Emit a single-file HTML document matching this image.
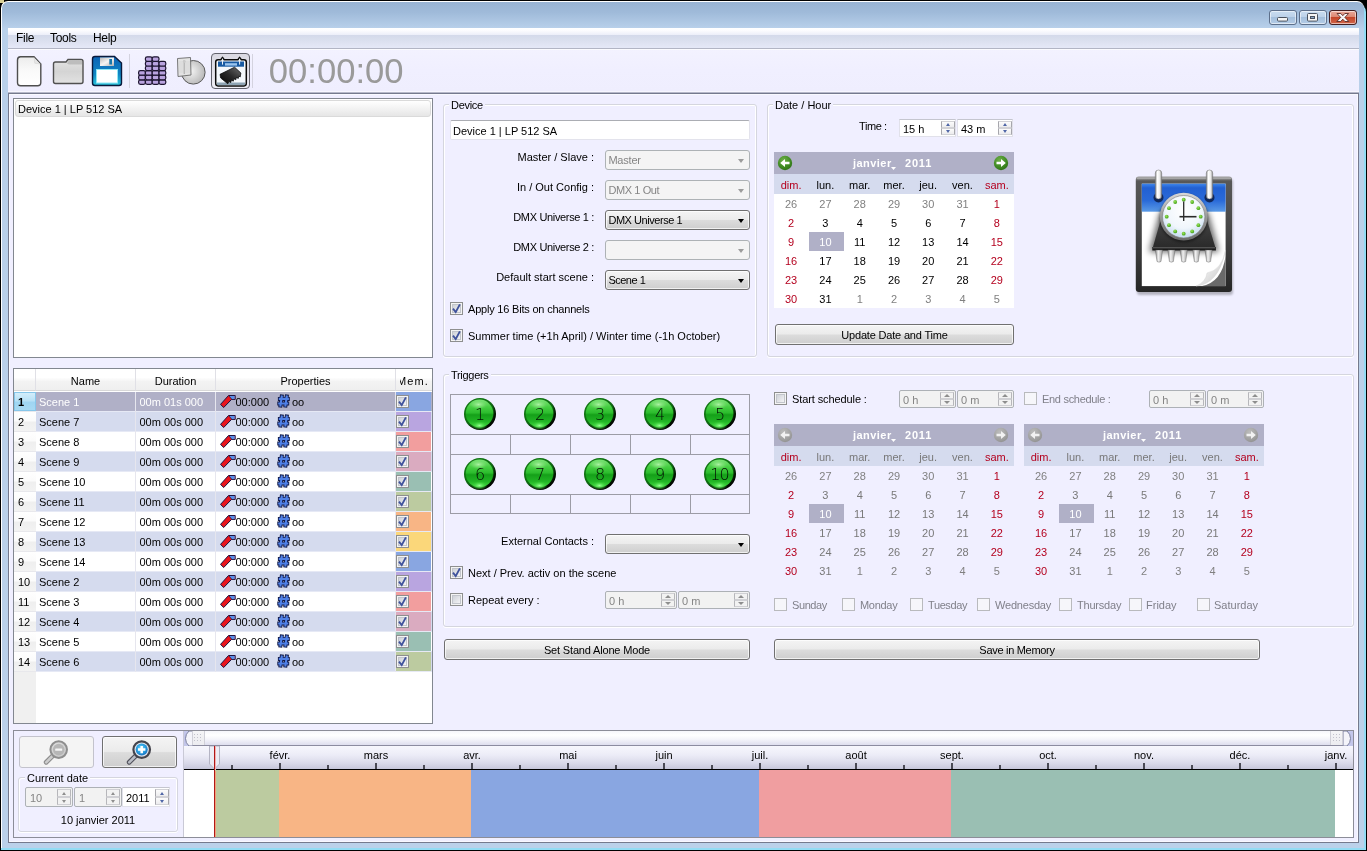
<!DOCTYPE html>
<html>
<head>
<meta charset="utf-8">
<title>Stand Alone</title>
<style>
*{box-sizing:border-box;margin:0;padding:0}
html,body{width:1367px;height:851px;overflow:hidden;background:#000}
body{font-family:"Liberation Sans","DejaVu Sans",sans-serif;font-size:11px;color:#000;position:relative}
.abs,.abs-all *{position:absolute}
#win{position:absolute;left:0;top:0;width:1367px;height:851px;overflow:hidden;will-change:transform}
#frame{position:absolute;left:1px;top:1px;width:1363px;height:847px;border-radius:7px 7px 0 0;
 background:linear-gradient(to bottom,#98b3d3 0px,#9fbad9 10px,#b9d1eb 27px,#b9d0ea 60px,#bbd1ea 100%);
 border-left:1px solid #fff;border-top:1px solid #fff}
#cyan{position:absolute;left:1px;top:4px;width:1365px;height:846px;background:#93dcf4;border-radius:8px 8px 0 0}
#client{position:absolute;left:8px;top:28px;width:1351px;height:815px;background:#f0efff}
/* caption buttons */
.cap{position:absolute;top:10px;height:15px;border:1px solid #5d6f8a;border-radius:3px;
 background:linear-gradient(to bottom,#c9dcf0 0,#bdd2e9 45%,#a4bfdc 50%,#b5cde7 100%);box-shadow:inset 0 0 0 1px rgba(255,255,255,.55)}
.cap.close{background:linear-gradient(to bottom,#e9a99b 0,#dc8873 45%,#c4462a 50%,#d0664a 100%);border-color:#431e20}
/* menu */
#menubar{position:absolute;left:8px;top:28px;width:1351px;height:20px;
 background:linear-gradient(to bottom,#ffffff 0,#fdfdff 2px,#eceef9 7px,#d3d9ea 7px,#dadfee 12px,#e5e8f7 20px)}
#menubar span{position:absolute;top:3px;font-size:12px;font-family:"Liberation Sans",sans-serif;letter-spacing:-.3px}
.hline{position:absolute;height:1px}
.tb{font-family:"Liberation Sans",sans-serif;font-size:12px}
.gb{position:absolute;border:1px solid #d5d6de;border-radius:3px;box-shadow:inset 1px 1px 0 #fff, inset -1px 0 0 #fff, 0 1px 0 #fff}
.gbl{position:absolute;background:#f0efff;padding:0 2px;line-height:13px;height:13px;white-space:nowrap}
.lbl{position:absolute;white-space:nowrap;line-height:13px;height:13px}
.r{text-align:right}
.dis{color:#80808a}

#cframe{position:absolute;left:8px;top:93px;width:1351px;height:750px;border:1px solid #757a8e;box-shadow:inset 0 0 0 1px #f9f9ff;background:#f0efff}
#devlist{position:absolute;left:13px;top:98px;width:420px;height:260px;border:1px solid #828790;background:#fff}
#devitem{position:absolute;left:15px;top:100px;width:416px;height:17px;border:1px solid #dadada;border-radius:3px;background:linear-gradient(to bottom,#ffffff 0,#f4f4f4 45%,#e6e6e6 100%)}
#sctab{position:absolute;left:13px;top:368px;width:420px;height:356px;border:1px solid #828790;background:#fff;overflow:hidden}
#sctab .hd{position:absolute;top:0;height:22px;background:linear-gradient(to bottom,#ffffff 0,#ffffff 40%,#f3f3f3 60%,#efefef 100%);border-right:1px solid #e0e0e6;border-bottom:1px solid #d8d8d8;text-align:center;line-height:24px}
#sctab .rh{position:absolute;left:0;width:22px;height:20px;background:linear-gradient(to bottom,#ffffff 0,#fbfbfb 45%,#efefef 55%,#f3f3f3 100%);border-bottom:1px solid #e8e8ec;padding-left:4px;line-height:20px}
#sctab .rh.sel{background:linear-gradient(to bottom,#d6effb 0,#b8e1f6 45%,#9fd5f2 55%,#a9daf3 100%);font-weight:bold;box-shadow:inset 0 0 0 1px #86c6ea}
#sctab .row{position:absolute;left:22px;width:396px;height:20px;line-height:19px;border-bottom:1px solid #e6e9f5}
#sctab .row.alt{background:#d5dbee}
#sctab .row.sel{background:#b0b0c7;color:#fff}
#sctab .row span{position:absolute;top:0;line-height:20px;white-space:nowrap}
#sctab .row .vl{position:absolute;top:0;width:1px;height:20px;background:#e6e6ee}
#sctab .mem{position:absolute;left:382px;top:0;width:35px;height:19px}
.cb{position:absolute;width:13px;height:13px;border:1px solid #8e8f8f;background:#f4f4f4;box-shadow:inset 0 0 0 1px #f4f4f4, inset 0 0 0 2px #c2c5cb;}
.cb i{position:absolute;left:2px;top:2px;width:7px;height:7px;background:linear-gradient(135deg,#cfd2d8 0,#f3f3f5 100%)}
.cb svg{position:absolute;left:1px;top:1px}
.cb.d{border-color:#b9babd;box-shadow:none;background:#f6f6fa}

.combo{position:absolute;width:145px;height:20px;border:1px solid #707070;border-radius:3px;background:linear-gradient(to bottom,#f4f4f4 0,#ebebeb 48%,#dcdcdc 52%,#cecece 100%);box-shadow:inset 0 0 0 1px rgba(255,255,255,.7);padding:3px 0 0 2.400px;line-height:13px;white-space:nowrap}
.combo:after{content:"";position:absolute;right:5px;top:8px;border:4px solid transparent;border-top:4px solid #000;border-bottom:none;border-left-width:3.700px;border-right-width:3.700px}
.combo.d{border-color:#adb2b5;background:#f4f4f4;color:#858585;box-shadow:none}
.combo.d:after{border-top-color:#9c9c9c}
.edit{position:absolute;background:#fff;border:1px solid #e3e3ec;border-top-color:#abadb3;border-radius:2px}
.spin{position:absolute;height:18px;background:#fff;border:1px solid #e1e1ea;border-top-color:#c5c6cf;padding:3px 0 0 3px;line-height:13px;white-space:nowrap}
.spin b{position:absolute;right:0;width:14px;height:7px;border:1px solid #d2d2d6;border-left-color:#a6a6ac;border-right-color:#a6a6ac;background:linear-gradient(to bottom,#fcfcfc,#ececee)}
.spin b.u{top:1px}.spin b.dn{bottom:1px}
.spin b:after{content:"";position:absolute;left:3.500px;top:1px;border:2.500px solid transparent}
.spin b.u:after{border-bottom:3px solid #4f66a6;border-top:none}
.spin b.dn:after{border-top:3px solid #4f66a6;border-bottom:none}
.spin.d{background:#f2f2f2;border-color:#adb1b6;color:#858585;border-radius:2px}
.spin.d b{right:1px;border-color:#d0d0d4;border-left-color:#b6b6ba;border-right-color:#b6b6ba;background:#f2f2f2}
.spin.d b:after{left:3px;border-width:3px}
.spin.d b.u:after{border-bottom-color:#8e8e8e}
.spin.d b.dn:after{border-top-color:#8e8e8e}
.btn{position:absolute;border:1px solid #707070;border-radius:3px;background:linear-gradient(to bottom,#f4f4f4 0,#ebebeb 48%,#dcdcdc 52%,#cecece 100%);box-shadow:inset 0 0 0 1px rgba(255,255,255,.7);text-align:center;line-height:20px;white-space:nowrap}
.cal{position:absolute;width:240px;height:156px;background:#fff}
.cal .nav{position:absolute;left:0;top:0;width:240px;height:22px;background:#b0b0c7;color:#fff;font-weight:bold}
.cal .nav span{position:absolute;top:5px;line-height:13px;letter-spacing:.45px}
.cal .dn{position:absolute;left:0;top:22px;width:240px;height:20px;background:#d5dbee}
.cal span.c{position:absolute;width:34px;text-align:center;line-height:13px;height:13px}
.cal .red{color:#b4001e}
.cal .gr{color:#808080}
.cal .selc{position:absolute;background:#b0b0c7}
.cal.d{background:transparent;color:#787878}
.cal.d .red{color:#b4001e}

.tg{position:absolute;background:#9c9ca6}
.tbn{position:absolute;width:32px;height:32px;text-align:center;font-family:"DejaVu Sans","Liberation Sans",sans-serif;font-weight:200;font-size:16px;line-height:34px;color:#041004}
.tbn svg{position:absolute;left:0;top:0}
.tbn span{position:relative}

#bpanel{position:absolute;left:13px;top:730px;width:1341px;height:108px;border:1px solid #8c8d98}
#tl{position:absolute;left:184px;top:731px;width:1169px;height:106px;background:#fff;overflow:hidden}
#tl .sb{position:absolute;left:0;top:0;width:1169px;height:15px;background:linear-gradient(to bottom,#f6f6fb 0,#ffffff 30%,#f4f4fa 60%,#dedeee 100%);border-bottom:1px solid #8c8ca0}
#tl .ruler{position:absolute;left:0;top:15px;width:1169px;height:24px;background:linear-gradient(to bottom,#f7f7fd 0,#ececf7 40%,#d9d9e9 75%,#c6c6da 100%);border-bottom:1px solid #000}
#tl .mk{position:absolute;top:32px;width:2px;height:6px;background:#4a4a55}
#tl .mn{position:absolute;top:34px;width:2px;height:4px;background:#4a4a55}
#tl .ml{position:absolute;top:18px;width:60px;margin-left:-29px;text-align:center;line-height:13px;height:13px}
#tl .seg{position:absolute;top:39px;height:67px}
.grip{position:absolute;top:0;width:13px;height:14px;border-left:1px solid #d0d0d8;border-right:1px solid #d0d0d8;background:linear-gradient(to bottom,#f4f4f6,#ececf0)}

.spin.s20{height:20px;padding-top:4px}
.spin.s20 b{height:8px;top:1px}
.spin.s20 b.dn{top:9px;bottom:auto}
.spin.s20 b:after{left:3.500px;top:2px;border-width:2.800px;border-top-width:0;border-bottom-width:3px}
.spin.s20 b.dn:after{border-top-width:3px;border-bottom-width:0;top:2px}
</style>
</head>
<body>
<div id="win">
<div style="position:absolute;left:0;top:0;width:4px;height:3px;background:#d8cf96"></div>
<div id="cyan"></div>
<div id="frame"></div>
<div class="cap" style="left:1269px;width:28px"></div>
<div class="cap" style="left:1299px;width:28px"></div>
<div class="cap close" style="left:1329px;width:28px"></div>
<svg style="position:absolute;left:1269px;top:10px" width="90" height="15" viewBox="1269 10 90 15">
<rect x="1277.500" y="17.500" width="10" height="3.600" rx="1" fill="#f4f4f4" stroke="#4a525e" stroke-width="1"/>
<rect x="1307.500" y="13.500" width="10" height="7.600" rx="1" fill="#f4f4f4" stroke="#4a525e" stroke-width="1"/>
<rect x="1310.500" y="16.500" width="4" height="2" fill="#8aa6c6" stroke="#4a525e" stroke-width="1"/>
<path d="M1337 13.500 L1340.800 13.500 L1342.800 15.700 L1344.800 13.500 L1348.600 13.500 L1344.900 17.400 L1348.800 21.500 L1344.900 21.500 L1342.800 19.200 L1340.700 21.500 L1336.800 21.500 L1340.700 17.400 Z" fill="#f6f6f6" stroke="#5a2a26" stroke-width=".9" stroke-linejoin="round"/>
</svg>
<div id="client"></div>
<div id="menubar"><span style="left:8px">File</span><span style="left:42px">Tools</span><span style="left:85px">Help</span></div>
<div class="hline" style="left:8px;top:48px;width:1351px;background:#b2b5c4"></div>

<div id="toolbar" style="position:absolute;left:8px;top:49px;width:1351px;height:43px;background:linear-gradient(to bottom,#f3f2ff 0,#f0efff 50%,#efeefe 100%)"></div>
<div class="hline" style="left:8px;top:49px;width:1351px;background:#fbfbff"></div>
<svg style="position:absolute;left:8px;top:49px" width="420" height="43" viewBox="8 49 420 43">
<defs>
<linearGradient id="gDoc" x1="0" y1="0" x2="0" y2="1"><stop offset="0" stop-color="#ececec"/><stop offset=".5" stop-color="#fafafa"/><stop offset="1" stop-color="#ffffff"/></linearGradient>
<linearGradient id="gFold" x1="0" y1="0" x2="0" y2="1"><stop offset="0" stop-color="#e4e4e4"/><stop offset=".5" stop-color="#d4d4d4"/><stop offset="1" stop-color="#e2e2e2"/></linearGradient>
<linearGradient id="gSave" x1="0" y1="0" x2="0" y2="1"><stop offset="0" stop-color="#0c63b4"/><stop offset=".6" stop-color="#0f84c4"/><stop offset="1" stop-color="#2bc6dc"/></linearGradient>
<linearGradient id="gShut" x1="0" y1="0" x2="1" y2="1"><stop offset="0" stop-color="#b9b9b9"/><stop offset=".5" stop-color="#f4f4f4"/><stop offset="1" stop-color="#b0b0b0"/></linearGradient>
<radialGradient id="gPie" cx=".4" cy=".45" r=".65"><stop offset="0" stop-color="#f4f4f4"/><stop offset="1" stop-color="#b4b4b4"/></radialGradient>
<linearGradient id="gBtn" x1="0" y1="0" x2="0" y2="1"><stop offset="0" stop-color="#d9d8e2"/><stop offset=".5" stop-color="#e3e2ea"/><stop offset="1" stop-color="#efeef6"/></linearGradient>
<linearGradient id="gChip" x1="0" y1="1" x2="1" y2="0"><stop offset="0" stop-color="#050505"/><stop offset=".5" stop-color="#2a2a2a"/><stop offset="1" stop-color="#6e6e6e"/></linearGradient>
</defs>
<!-- new -->
<path d="M20.500 56.800 H34 L40.800 64 V82.500 Q40.800 85.700 37.600 85.700 H20.700 Q17.500 85.700 17.500 82.500 V60 Q17.500 56.800 20.500 56.800 Z" fill="url(#gDoc)" stroke="#4e4e4e" stroke-width="1.400"/>
<path d="M34 57.500 L34.800 63.200 L40.300 64" fill="#e6e6e6" stroke="#d2d2d2" stroke-width=".6"/>
<!-- open -->
<path d="M55.5 62 H66 L68 59.5 H81 Q83 59.5 83 61.5 V81.5 Q83 83.5 81 83.5 H55.5 Q53.5 83.5 53.5 81.5 V64 Q53.5 62 55.5 62 Z" fill="url(#gFold)" stroke="#505050" stroke-width="1.400"/>
<path d="M67 63.5 Q68 60.5 70 60.5 H82 V64.5 H70 Q68 64.5 67 63.5Z" fill="#bdbdbd"/>
<!-- save -->
<path d="M95 56.5 H114.5 L121.5 63 V83 Q121.500 85.500 119 85.500 H95 Q92.500 85.500 92.500 83 V59 Q92.500 56.500 95 56.500 Z" fill="url(#gSave)" stroke="#0a1a3c" stroke-width="1.4"/>
<rect x="100" y="57.5" width="14" height="8.5" fill="url(#gShut)"/>
<rect x="109.300" y="59" width="2.700" height="5.500" fill="#1877aa"/>
<rect x="96.500" y="69.500" width="21" height="13.500" fill="#fff" stroke="#8fe6f4" stroke-width="1"/>
<!-- sep -->
<rect x="129" y="54" width="1" height="34" fill="#d4d3df"/>
<!-- grid -->
<g fill="#b9a3df" stroke="#1d1530" stroke-width="1.2">
<rect x="138.6" y="79.8" width="6.8" height="4.6" rx="1.8"/><rect x="138.6" y="75.2" width="6.8" height="4.6" rx="1.8"/><rect x="138.6" y="70.6" width="6.8" height="4.6" rx="1.8"/><rect x="145.4" y="79.8" width="6.8" height="4.6" rx="1.8"/><rect x="145.4" y="75.2" width="6.8" height="4.6" rx="1.8"/><rect x="145.4" y="70.6" width="6.8" height="4.6" rx="1.8"/><rect x="145.4" y="66.0" width="6.8" height="4.6" rx="1.8"/><rect x="145.4" y="61.4" width="6.8" height="4.6" rx="1.8"/><rect x="145.4" y="56.8" width="6.8" height="4.6" rx="1.8"/><rect x="152.2" y="79.8" width="6.8" height="4.6" rx="1.8"/><rect x="152.2" y="75.2" width="6.8" height="4.6" rx="1.8"/><rect x="152.2" y="70.6" width="6.8" height="4.6" rx="1.8"/><rect x="152.2" y="66.0" width="6.8" height="4.6" rx="1.8"/><rect x="152.2" y="61.4" width="6.8" height="4.6" rx="1.8"/><rect x="152.2" y="56.8" width="6.8" height="4.6" rx="1.8"/><rect x="159.0" y="79.8" width="6.8" height="4.6" rx="1.8"/><rect x="159.0" y="75.2" width="6.8" height="4.6" rx="1.8"/><rect x="159.0" y="70.6" width="6.8" height="4.6" rx="1.8"/><rect x="159.0" y="66.0" width="6.8" height="4.6" rx="1.8"/><rect x="159.0" y="61.4" width="6.8" height="4.6" rx="1.8"/>
</g>
<!-- pie -->
<circle cx="193.300" cy="72.300" r="11.800" fill="url(#gPie)" stroke="#5a5a5a" stroke-width="1"/>
<path d="M177.500 58.500 L190.500 57.500 L191 75 L178 76.500 Z" fill="#e3e3e3" stroke="#6a6a6a" stroke-width=".9"/>
<path d="M184.300 60 V74" stroke="#b5b5b5" stroke-width="1.400"/><circle cx="184.300" cy="61.500" r="1.400" fill="#c9c9c9"/>
<g stroke="#c9c9c9" stroke-width=".5"><path d="M179 62H190M179 64H190M179 66H190M179 68H190M179 70H190M179 72H190"/></g>
<!-- calendar button -->
<rect x="211.500" y="53.500" width="38" height="35" rx="3.500" fill="url(#gBtn)" stroke="#62626c" stroke-width="1"/>
<path d="M218 59.700 H220.800 L222.500 57.400 L224.200 59.700 H237.900 L239.600 57.400 L241.300 59.700 H244 Q246.300 59.700 246.300 62 V83.600 Q246.300 85.900 244 85.900 H218 Q215.700 85.900 215.700 83.600 V62 Q215.700 59.700 218 59.700 Z" fill="#f4f8fc" stroke="#0a0a0a" stroke-width="1.500" stroke-linejoin="round"/>
<rect x="218" y="61.500" width="26" height="5.200" fill="#185aa2"/>
<rect x="225" y="63.200" width="12" height="2.400" fill="#9cc6ee"/>
<rect x="222" y="58.600" width="1" height="6" fill="#eef4fa"/>
<rect x="239.100" y="58.600" width="1" height="6" fill="#eef4fa"/>
<rect x="217" y="82.500" width="28" height="2.600" fill="#8ea4b4"/>
<path d="M220 74.300 L234.600 67.200 L240.900 73 L240.200 77 L238.800 76 L238.300 78.400 L236.400 77.400 L235.800 79.800 L233.900 78.800 L233.300 81.200 L231.400 80.200 L230.800 82.600 L228.900 81.600 L227.800 83.800 L220.700 78 Z" fill="url(#gChip)" stroke="#000" stroke-width=".7" stroke-linejoin="round"/>
<!-- sep -->
<rect x="252" y="54" width="1" height="34" fill="#d4d3df"/>
<text x="268.800" y="82.500" font-family="Liberation Sans, sans-serif" font-size="34.600" fill="#9a9a9a" textLength="134.800" lengthAdjust="spacingAndGlyphs">00:00:00</text>
</svg>
<div class="hline" style="left:8px;top:91px;width:1351px;background:#f7f6ff"></div><div class="hline" style="left:8px;top:92px;width:1351px;background:#b6b8c9"></div>


<div id="cframe"></div>
<div id="devlist"></div>
<div id="devitem"></div>
<div class="lbl" style="left:18px;top:103px">Device 1 | LP 512 SA</div>
<svg width="0" height="0" style="position:absolute"><defs>
<g id="pen"><path d="M.5 10.400 L3.700 13.500 L11.600 5.400 H15.200 V1.500 H8.500 Z" fill="#ea141c" stroke="#1c1440" stroke-width="1" stroke-linejoin="round"/><path d="M9.200 2 H14.700 V4.900 H11.400 L9.600 2.700 Z" fill="#5b8ee6"/><path d="M9 2 L11.700 5.100" stroke="#1c1440" stroke-width=".7"/></g>
<g id="hash"><g fill="none" stroke="#121a48" stroke-width="4" stroke-linecap="butt"><path d="M5 .6 L3.200 13.600M10 .6 L8.200 13.600M.9 4.900 H12.800M.3 9.500 H12.200"/></g><g fill="none" stroke="#4f80e6" stroke-width="2.100"><path d="M4.900 1.500 L3.300 12.700M9.900 1.500 L8.300 12.700M1.800 4.900 H11.900M1.200 9.500 H11.300"/></g></g>
<g id="chk"><path d="M1 4.700 L3.700 8.100 L7.900 .400" fill="none" stroke="#3f529c" stroke-width="1.850" stroke-linejoin="miter"/></g>
</defs></svg>
<div id="sctab">
<div class="hd" style="left:0;width:22px"></div>
<div class="hd" style="left:22px;width:100px">Name</div>
<div class="hd" style="left:122px;width:80px">Duration</div>
<div class="hd" style="left:202px;width:180px">Properties</div>
<div class="hd" style="left:382px;width:36px;border-right:none;text-align:left;padding-left:4px"><span style="display:block;overflow:hidden;white-space:nowrap;text-indent:-3px;letter-spacing:1.100px">Mem.</span></div>
<div style="position:absolute;left:0;top:303px;width:22px;height:51px;background:#f0f0f0"></div>
<div class="rh sel" style="top:23px">1</div><div class="row sel" style="top:23px"><span style="left:3px">Scene 1</span><i class="vl" style="left:99px"></i><span style="left:103.500px">00m 01s 000</span><i class="vl" style="left:179px"></i><svg style="position:absolute;left:184px;top:2px" width="17" height="15"><use href="#pen"/></svg><span style="left:199.500px;color:#000">00:000</span><svg style="position:absolute;left:241px;top:2px" width="14" height="14"><use href="#hash"/></svg><span style="left:256px;color:#000">oo</span><i class="vl" style="left:359px"></i><div class="mem" style="left:360px;background:#89a6e1"><div class="cb" style="left:0px;top:3px"><i></i><svg width="11" height="11"><use href="#chk"/></svg></div></div></div>
<div class="rh" style="top:43px">2</div><div class="row alt" style="top:43px"><span style="left:3px">Scene 7</span><i class="vl" style="left:99px"></i><span style="left:103.500px">00m 00s 000</span><i class="vl" style="left:179px"></i><svg style="position:absolute;left:184px;top:2px" width="17" height="15"><use href="#pen"/></svg><span style="left:199.500px;color:#000">00:000</span><svg style="position:absolute;left:241px;top:2px" width="14" height="14"><use href="#hash"/></svg><span style="left:256px;color:#000">oo</span><i class="vl" style="left:359px"></i><div class="mem" style="left:360px;background:#b9a5e0"><div class="cb" style="left:0px;top:3px"><i></i><svg width="11" height="11"><use href="#chk"/></svg></div></div></div>
<div class="rh" style="top:63px">3</div><div class="row" style="top:63px"><span style="left:3px">Scene 8</span><i class="vl" style="left:99px"></i><span style="left:103.500px">00m 00s 000</span><i class="vl" style="left:179px"></i><svg style="position:absolute;left:184px;top:2px" width="17" height="15"><use href="#pen"/></svg><span style="left:199.500px;color:#000">00:000</span><svg style="position:absolute;left:241px;top:2px" width="14" height="14"><use href="#hash"/></svg><span style="left:256px;color:#000">oo</span><i class="vl" style="left:359px"></i><div class="mem" style="left:360px;background:#f29e9e"><div class="cb" style="left:0px;top:3px"><i></i><svg width="11" height="11"><use href="#chk"/></svg></div></div></div>
<div class="rh" style="top:83px">4</div><div class="row alt" style="top:83px"><span style="left:3px">Scene 9</span><i class="vl" style="left:99px"></i><span style="left:103.500px">00m 00s 000</span><i class="vl" style="left:179px"></i><svg style="position:absolute;left:184px;top:2px" width="17" height="15"><use href="#pen"/></svg><span style="left:199.500px;color:#000">00:000</span><svg style="position:absolute;left:241px;top:2px" width="14" height="14"><use href="#hash"/></svg><span style="left:256px;color:#000">oo</span><i class="vl" style="left:359px"></i><div class="mem" style="left:360px;background:#daabc0"><div class="cb" style="left:0px;top:3px"><i></i><svg width="11" height="11"><use href="#chk"/></svg></div></div></div>
<div class="rh" style="top:103px">5</div><div class="row" style="top:103px"><span style="left:3px">Scene 10</span><i class="vl" style="left:99px"></i><span style="left:103.500px">00m 00s 000</span><i class="vl" style="left:179px"></i><svg style="position:absolute;left:184px;top:2px" width="17" height="15"><use href="#pen"/></svg><span style="left:199.500px;color:#000">00:000</span><svg style="position:absolute;left:241px;top:2px" width="14" height="14"><use href="#hash"/></svg><span style="left:256px;color:#000">oo</span><i class="vl" style="left:359px"></i><div class="mem" style="left:360px;background:#9abfb3"><div class="cb" style="left:0px;top:3px"><i></i><svg width="11" height="11"><use href="#chk"/></svg></div></div></div>
<div class="rh" style="top:123px">6</div><div class="row alt" style="top:123px"><span style="left:3px">Scene 11</span><i class="vl" style="left:99px"></i><span style="left:103.500px">00m 00s 000</span><i class="vl" style="left:179px"></i><svg style="position:absolute;left:184px;top:2px" width="17" height="15"><use href="#pen"/></svg><span style="left:199.500px;color:#000">00:000</span><svg style="position:absolute;left:241px;top:2px" width="14" height="14"><use href="#hash"/></svg><span style="left:256px;color:#000">oo</span><i class="vl" style="left:359px"></i><div class="mem" style="left:360px;background:#bccba0"><div class="cb" style="left:0px;top:3px"><i></i><svg width="11" height="11"><use href="#chk"/></svg></div></div></div>
<div class="rh" style="top:143px">7</div><div class="row" style="top:143px"><span style="left:3px">Scene 12</span><i class="vl" style="left:99px"></i><span style="left:103.500px">00m 00s 000</span><i class="vl" style="left:179px"></i><svg style="position:absolute;left:184px;top:2px" width="17" height="15"><use href="#pen"/></svg><span style="left:199.500px;color:#000">00:000</span><svg style="position:absolute;left:241px;top:2px" width="14" height="14"><use href="#hash"/></svg><span style="left:256px;color:#000">oo</span><i class="vl" style="left:359px"></i><div class="mem" style="left:360px;background:#f8b585"><div class="cb" style="left:0px;top:3px"><i></i><svg width="11" height="11"><use href="#chk"/></svg></div></div></div>
<div class="rh" style="top:163px">8</div><div class="row alt" style="top:163px"><span style="left:3px">Scene 13</span><i class="vl" style="left:99px"></i><span style="left:103.500px">00m 00s 000</span><i class="vl" style="left:179px"></i><svg style="position:absolute;left:184px;top:2px" width="17" height="15"><use href="#pen"/></svg><span style="left:199.500px;color:#000">00:000</span><svg style="position:absolute;left:241px;top:2px" width="14" height="14"><use href="#hash"/></svg><span style="left:256px;color:#000">oo</span><i class="vl" style="left:359px"></i><div class="mem" style="left:360px;background:#fbd77a"><div class="cb" style="left:0px;top:3px"><i></i><svg width="11" height="11"><use href="#chk"/></svg></div></div></div>
<div class="rh" style="top:183px">9</div><div class="row" style="top:183px"><span style="left:3px">Scene 14</span><i class="vl" style="left:99px"></i><span style="left:103.500px">00m 00s 000</span><i class="vl" style="left:179px"></i><svg style="position:absolute;left:184px;top:2px" width="17" height="15"><use href="#pen"/></svg><span style="left:199.500px;color:#000">00:000</span><svg style="position:absolute;left:241px;top:2px" width="14" height="14"><use href="#hash"/></svg><span style="left:256px;color:#000">oo</span><i class="vl" style="left:359px"></i><div class="mem" style="left:360px;background:#89a6e1"><div class="cb" style="left:0px;top:3px"><i></i><svg width="11" height="11"><use href="#chk"/></svg></div></div></div>
<div class="rh" style="top:203px">10</div><div class="row alt" style="top:203px"><span style="left:3px">Scene 2</span><i class="vl" style="left:99px"></i><span style="left:103.500px">00m 00s 000</span><i class="vl" style="left:179px"></i><svg style="position:absolute;left:184px;top:2px" width="17" height="15"><use href="#pen"/></svg><span style="left:199.500px;color:#000">00:000</span><svg style="position:absolute;left:241px;top:2px" width="14" height="14"><use href="#hash"/></svg><span style="left:256px;color:#000">oo</span><i class="vl" style="left:359px"></i><div class="mem" style="left:360px;background:#b9a5e0"><div class="cb" style="left:0px;top:3px"><i></i><svg width="11" height="11"><use href="#chk"/></svg></div></div></div>
<div class="rh" style="top:223px">11</div><div class="row" style="top:223px"><span style="left:3px">Scene 3</span><i class="vl" style="left:99px"></i><span style="left:103.500px">00m 00s 000</span><i class="vl" style="left:179px"></i><svg style="position:absolute;left:184px;top:2px" width="17" height="15"><use href="#pen"/></svg><span style="left:199.500px;color:#000">00:000</span><svg style="position:absolute;left:241px;top:2px" width="14" height="14"><use href="#hash"/></svg><span style="left:256px;color:#000">oo</span><i class="vl" style="left:359px"></i><div class="mem" style="left:360px;background:#f29e9e"><div class="cb" style="left:0px;top:3px"><i></i><svg width="11" height="11"><use href="#chk"/></svg></div></div></div>
<div class="rh" style="top:243px">12</div><div class="row alt" style="top:243px"><span style="left:3px">Scene 4</span><i class="vl" style="left:99px"></i><span style="left:103.500px">00m 00s 000</span><i class="vl" style="left:179px"></i><svg style="position:absolute;left:184px;top:2px" width="17" height="15"><use href="#pen"/></svg><span style="left:199.500px;color:#000">00:000</span><svg style="position:absolute;left:241px;top:2px" width="14" height="14"><use href="#hash"/></svg><span style="left:256px;color:#000">oo</span><i class="vl" style="left:359px"></i><div class="mem" style="left:360px;background:#daabc0"><div class="cb" style="left:0px;top:3px"><i></i><svg width="11" height="11"><use href="#chk"/></svg></div></div></div>
<div class="rh" style="top:263px">13</div><div class="row" style="top:263px"><span style="left:3px">Scene 5</span><i class="vl" style="left:99px"></i><span style="left:103.500px">00m 00s 000</span><i class="vl" style="left:179px"></i><svg style="position:absolute;left:184px;top:2px" width="17" height="15"><use href="#pen"/></svg><span style="left:199.500px;color:#000">00:000</span><svg style="position:absolute;left:241px;top:2px" width="14" height="14"><use href="#hash"/></svg><span style="left:256px;color:#000">oo</span><i class="vl" style="left:359px"></i><div class="mem" style="left:360px;background:#9abfb3"><div class="cb" style="left:0px;top:3px"><i></i><svg width="11" height="11"><use href="#chk"/></svg></div></div></div>
<div class="rh" style="top:283px">14</div><div class="row alt" style="top:283px"><span style="left:3px">Scene 6</span><i class="vl" style="left:99px"></i><span style="left:103.500px">00m 00s 000</span><i class="vl" style="left:179px"></i><svg style="position:absolute;left:184px;top:2px" width="17" height="15"><use href="#pen"/></svg><span style="left:199.500px;color:#000">00:000</span><svg style="position:absolute;left:241px;top:2px" width="14" height="14"><use href="#hash"/></svg><span style="left:256px;color:#000">oo</span><i class="vl" style="left:359px"></i><div class="mem" style="left:360px;background:#bccba0"><div class="cb" style="left:0px;top:3px"><i></i><svg width="11" height="11"><use href="#chk"/></svg></div></div></div>
</div>


<div class="gb" style="left:443px;top:104px;width:314px;height:253px"></div>
<div class="gbl" style="left:449px;top:99px;letter-spacing:-0.3px">Device</div>
<div class="edit" style="left:450px;top:120px;width:300px;height:20px"></div>
<div class="lbl" style="left:453px;top:125px">Device 1 | LP 512 SA</div>
<div class="lbl r" style="left:444px;width:150px;top:151px">Master / Slave :</div>
<div class="combo d" style="left:605px;top:150px;letter-spacing:-0.2px">Master</div>
<div class="lbl r" style="left:444px;width:150px;top:181px">In / Out Config :</div>
<div class="combo d" style="left:605px;top:180px;letter-spacing:-0.4px">DMX 1 Out</div>
<div class="lbl r" style="left:444px;width:150px;top:211px;letter-spacing:-0.34px">DMX Universe 1 :</div>
<div class="combo" style="left:605px;top:210px;letter-spacing:-0.45px">DMX Universe 1</div>
<div class="lbl r" style="left:444px;width:150px;top:241px;letter-spacing:-0.34px">DMX Universe 2 :</div>
<div class="combo d" style="left:605px;top:240px"></div>
<div class="lbl r" style="left:444px;width:150px;top:271px">Default start scene :</div>
<div class="combo" style="left:605px;top:270px;letter-spacing:-0.5px">Scene 1</div>
<div class="cb" style="left:450px;top:302px"><i></i><svg width="11" height="11"><use href="#chk"/></svg></div>
<div class="lbl" style="left:468px;top:303px;letter-spacing:-0.2px">Apply 16 Bits on channels</div>
<div class="cb" style="left:450px;top:329px"><i></i><svg width="11" height="11"><use href="#chk"/></svg></div>
<div class="lbl" style="left:468px;top:330px">Summer time (+1h April) / Winter time (-1h October)</div>


<svg width="0" height="0" style="position:absolute"><defs>
<radialGradient id="rgG" cx=".4" cy=".3" r=".8"><stop offset="0" stop-color="#6fb04a"/><stop offset=".6" stop-color="#3f8a22"/><stop offset="1" stop-color="#2c6a14"/></radialGradient>
<radialGradient id="rgD" cx=".4" cy=".3" r=".8"><stop offset="0" stop-color="#bdbdbd"/><stop offset=".6" stop-color="#a2a2a2"/><stop offset="1" stop-color="#8e8e8e"/></radialGradient>
<g id="arGR"><circle cx="8" cy="8" r="7.200" fill="url(#rgG)"/><path d="M3.500 6.800 H8 V4 L12.800 8 L8 12 V9.200 H3.500 Z" fill="#fff"/></g>
<g id="arGL"><circle cx="8" cy="8" r="7.200" fill="url(#rgG)"/><path d="M12.500 6.800 H8 V4 L3.200 8 L8 12 V9.200 H12.500 Z" fill="#fff"/></g>
<g id="arDR"><circle cx="8" cy="8" r="7.200" fill="url(#rgD)"/><path d="M3.500 6.800 H8 V4 L12.800 8 L8 12 V9.200 H3.500 Z" fill="#f2f2f2"/></g>
<g id="arDL"><circle cx="8" cy="8" r="7.200" fill="url(#rgD)"/><path d="M12.500 6.800 H8 V4 L3.200 8 L8 12 V9.200 H12.500 Z" fill="#f2f2f2"/></g>
</defs></svg>
<div class="gb" style="left:767px;top:104px;width:587px;height:253px"></div>
<div class="gbl" style="left:773px;top:99px">Date / Hour</div>
<div class="lbl" style="left:859px;top:120px;letter-spacing:-0.4px">Time :</div>
<div class="spin" style="left:899px;top:119px;width:57px">15 h<b class="u"></b><b class="dn"></b></div>
<div class="spin" style="left:957px;top:119px;width:56px">43 m<b class="u"></b><b class="dn"></b></div>
<div class="cal" style="left:774px;top:152px"><div class="nav"><span style="left:79px">janvier</span><span style="left:131px;letter-spacing:.8px">2011</span><svg style="position:absolute;left:117px;top:15px" width="5" height="3"><path d="M0 0H5L2.500 3Z" fill="#fff"/></svg><svg style="position:absolute;left:3px;top:3px" width="16" height="16"><use href="#arGL"/></svg><svg style="position:absolute;left:219px;top:3px" width="16" height="16"><use href="#arGR"/></svg></div><div class="dn"></div><span class="c red" style="left:0.1px;top:27px">dim.</span><span class="c" style="left:34.4px;top:27px">lun.</span><span class="c" style="left:68.7px;top:27px">mar.</span><span class="c" style="left:103.0px;top:27px">mer.</span><span class="c" style="left:137.2px;top:27px">jeu.</span><span class="c" style="left:171.5px;top:27px">ven.</span><span class="c red" style="left:205.8px;top:27px">sam.</span><div class="selc" style="left:35px;top:80px;width:35px;height:19px"></div><span class="c gr" style="left:0.1px;top:46px">26</span><span class="c gr" style="left:34.4px;top:46px">27</span><span class="c gr" style="left:68.7px;top:46px">28</span><span class="c gr" style="left:103.0px;top:46px">29</span><span class="c gr" style="left:137.2px;top:46px">30</span><span class="c gr" style="left:171.5px;top:46px">31</span><span class="c red" style="left:205.8px;top:46px">1</span><span class="c red" style="left:0.1px;top:65px">2</span><span class="c" style="left:34.4px;top:65px">3</span><span class="c" style="left:68.7px;top:65px">4</span><span class="c" style="left:103.0px;top:65px">5</span><span class="c" style="left:137.2px;top:65px">6</span><span class="c" style="left:171.5px;top:65px">7</span><span class="c red" style="left:205.8px;top:65px">8</span><span class="c red" style="left:0.1px;top:84px">9</span><span class="c" style="left:34.4px;top:84px;color:#fff">10</span><span class="c" style="left:68.7px;top:84px">11</span><span class="c" style="left:103.0px;top:84px">12</span><span class="c" style="left:137.2px;top:84px">13</span><span class="c" style="left:171.5px;top:84px">14</span><span class="c red" style="left:205.8px;top:84px">15</span><span class="c red" style="left:0.1px;top:103px">16</span><span class="c" style="left:34.4px;top:103px">17</span><span class="c" style="left:68.7px;top:103px">18</span><span class="c" style="left:103.0px;top:103px">19</span><span class="c" style="left:137.2px;top:103px">20</span><span class="c" style="left:171.5px;top:103px">21</span><span class="c red" style="left:205.8px;top:103px">22</span><span class="c red" style="left:0.1px;top:122px">23</span><span class="c" style="left:34.4px;top:122px">24</span><span class="c" style="left:68.7px;top:122px">25</span><span class="c" style="left:103.0px;top:122px">26</span><span class="c" style="left:137.2px;top:122px">27</span><span class="c" style="left:171.5px;top:122px">28</span><span class="c red" style="left:205.8px;top:122px">29</span><span class="c red" style="left:0.1px;top:141px">30</span><span class="c" style="left:34.4px;top:141px">31</span><span class="c gr" style="left:68.7px;top:141px">1</span><span class="c gr" style="left:103.0px;top:141px">2</span><span class="c gr" style="left:137.2px;top:141px">3</span><span class="c gr" style="left:171.5px;top:141px">4</span><span class="c gr" style="left:205.8px;top:141px">5</span></div>

<div class="btn" style="left:775px;top:324px;width:239px;height:21px;line-height:21px;letter-spacing:-0.18px">Update Date and Time</div>
<svg style="position:absolute;left:1124px;top:160px" width="120" height="144" viewBox="1124 160 120 144">
<defs>
<linearGradient id="biFrame" x1="0" y1="0" x2="0" y2="1"><stop offset="0" stop-color="#9a9a9a"/><stop offset=".04" stop-color="#585858"/><stop offset=".5" stop-color="#454545"/><stop offset="1" stop-color="#262626"/></linearGradient>
<linearGradient id="biBlue" x1="0" y1="0" x2="0" y2="1"><stop offset="0" stop-color="#3d86ec"/><stop offset=".15" stop-color="#2260d2"/><stop offset=".6" stop-color="#2a6ad8"/><stop offset="1" stop-color="#5a9ae6"/></linearGradient>
<linearGradient id="biRing" x1="0" y1="0" x2="1" y2="0"><stop offset="0" stop-color="#9a9a9a"/><stop offset=".35" stop-color="#ffffff"/><stop offset=".7" stop-color="#e8e8e8"/><stop offset="1" stop-color="#8a8a8a"/></linearGradient>
<linearGradient id="biRim" x1="0" y1="0" x2="0" y2="1"><stop offset="0" stop-color="#d8d8d8"/><stop offset=".5" stop-color="#9a9a9a"/><stop offset="1" stop-color="#6a6a6a"/></linearGradient>
<radialGradient id="biFace" cx=".5" cy=".35" r=".7"><stop offset="0" stop-color="#ffffff"/><stop offset=".6" stop-color="#f0f6fc"/><stop offset="1" stop-color="#bcd6ee"/></radialGradient>
<radialGradient id="biDot" cx=".4" cy=".35" r=".7"><stop offset="0" stop-color="#9be65a"/><stop offset="1" stop-color="#3a9a12"/></radialGradient>
<linearGradient id="biChip" x1="0" y1="0" x2="0" y2="1"><stop offset="0" stop-color="#4a4a4a"/><stop offset="1" stop-color="#2a2a2a"/></linearGradient>
<linearGradient id="biPin" x1="0" y1="0" x2="1" y2="0"><stop offset="0" stop-color="#8a8a8a"/><stop offset=".4" stop-color="#f2f2f2"/><stop offset="1" stop-color="#9a9a9a"/></linearGradient>
<linearGradient id="biCurl" x1="0" y1="0" x2="1" y2="1"><stop offset="0" stop-color="#ffffff"/><stop offset=".5" stop-color="#e8e8e8"/><stop offset="1" stop-color="#c0c0c0"/></linearGradient>
<filter id="biBlur" x="-30%" y="-30%" width="160%" height="160%"><feGaussianBlur stdDeviation="3"/></filter>
<filter id="biBlur1" x="-30%" y="-30%" width="160%" height="160%"><feGaussianBlur stdDeviation="1"/></filter>
</defs>
<rect x="1137" y="179" width="96" height="116" rx="3" fill="#000" opacity=".25" filter="url(#biBlur1)"/>
<rect x="1135.800" y="176.600" width="96.200" height="115.400" rx="3" fill="url(#biFrame)"/>
<rect x="1136.600" y="177.200" width="94.600" height="2" rx="1" fill="#b0b0b0" opacity=".8"/>
<rect x="1141.800" y="183.700" width="83.800" height="102.400" fill="#fff"/>
<rect x="1141.800" y="183.700" width="83.800" height="28" fill="url(#biBlue)"/>
<path d="M1160 212 L1208 212 L1219 252 L1149 252 Z" fill="#000" opacity=".6" filter="url(#biBlur)"/>
<path d="M1225.600 256 Q1222 282 1202 286.100 L1225.600 286.100 Z" fill="#6a6a6a"/>
<path d="M1225.600 250 Q1222 270 1207 273 Q1206 282 1196 286.100 Q1219 284 1225.600 250 Z" fill="url(#biCurl)" stroke="#d0d0d0" stroke-width=".4"/>
<ellipse cx="1158.500" cy="197.500" rx="5" ry="5" fill="#10285c"/>
<ellipse cx="1209.500" cy="197.500" rx="5" ry="5" fill="#10285c"/>
<rect x="1155.300" y="170" width="6.400" height="29" rx="3.200" fill="url(#biRing)" stroke="#6a6a6a" stroke-width=".5"/>
<rect x="1206.300" y="170" width="6.400" height="29" rx="3.200" fill="url(#biRing)" stroke="#6a6a6a" stroke-width=".5"/>
<path d="M1163 212 L1204.500 212 L1215.400 247.500 L1152.800 247.500 Z" fill="url(#biChip)"/>
<rect x="1152.300" y="247" width="63.600" height="3.500" fill="#1a1a1a"/>
<rect x="1152.800" y="247.300" width="62.600" height="1" fill="#6a6a6a"/>
<path d="M1155.4 250 H1162.6 L1161.0 261.500 Q1159.0 262.800 1157.0 261.500 Z" fill="url(#biPin)" stroke="#555" stroke-width=".4"/><path d="M1167.8 250 H1175.0 L1173.4 261.500 Q1171.4 262.800 1169.4 261.500 Z" fill="url(#biPin)" stroke="#555" stroke-width=".4"/><path d="M1180.1 250 H1187.3 L1185.7 261.500 Q1183.7 262.800 1181.7 261.500 Z" fill="url(#biPin)" stroke="#555" stroke-width=".4"/><path d="M1192.7 250 H1199.9 L1198.3 261.500 Q1196.3 262.800 1194.3 261.500 Z" fill="url(#biPin)" stroke="#555" stroke-width=".4"/><path d="M1205.0 250 H1212.2 L1210.6 261.500 Q1208.6 262.800 1206.6 261.500 Z" fill="url(#biPin)" stroke="#555" stroke-width=".4"/>
<circle cx="1183.700" cy="218" r="24.500" fill="#000" opacity=".35" filter="url(#biBlur1)"/>
<circle cx="1183.700" cy="216.700" r="23.900" fill="url(#biRim)"/>
<circle cx="1183.700" cy="216.700" r="21.200" fill="url(#biFace)" stroke="#7a7a7a" stroke-width=".6"/>
<circle cx="1183.7" cy="199.7" r="1.9" fill="url(#biDot)"/><circle cx="1192.2" cy="202.0" r="1.9" fill="url(#biDot)"/><circle cx="1198.4" cy="208.2" r="1.9" fill="url(#biDot)"/><circle cx="1200.7" cy="216.7" r="1.9" fill="url(#biDot)"/><circle cx="1198.4" cy="225.2" r="1.9" fill="url(#biDot)"/><circle cx="1192.2" cy="231.4" r="1.9" fill="url(#biDot)"/><circle cx="1183.7" cy="233.7" r="1.9" fill="url(#biDot)"/><circle cx="1175.2" cy="231.4" r="1.9" fill="url(#biDot)"/><circle cx="1169.0" cy="225.2" r="1.9" fill="url(#biDot)"/><circle cx="1166.7" cy="216.7" r="1.9" fill="url(#biDot)"/><circle cx="1169.0" cy="208.2" r="1.9" fill="url(#biDot)"/><circle cx="1175.2" cy="202.0" r="1.9" fill="url(#biDot)"/>
<path d="M1183.700 201.500 V221" stroke="#2a2a2a" stroke-width="1.300"/>
<path d="M1179.500 216.700 H1196.500" stroke="#2a2a2a" stroke-width="1.600"/>
</svg>



<svg width="0" height="0" style="position:absolute"><defs>
<radialGradient id="tbRim" cx=".40" cy=".38" r=".64"><stop offset="0" stop-color="#178f19"/><stop offset=".78" stop-color="#0d6a10"/><stop offset=".88" stop-color="#042004"/><stop offset="1" stop-color="#000"/></radialGradient>
<linearGradient id="tbFill" x1="0" y1="0" x2="0" y2="1"><stop offset="0" stop-color="#7ee678"/><stop offset=".25" stop-color="#48d044"/><stop offset=".48" stop-color="#2cbc2d"/><stop offset=".55" stop-color="#15a019"/><stop offset=".78" stop-color="#20b424"/><stop offset="1" stop-color="#40d840"/></linearGradient>
<radialGradient id="tbGlow" cx=".5" cy=".5" r=".5"><stop offset="0" stop-color="#9dff98" stop-opacity=".95"/><stop offset=".5" stop-color="#55e552" stop-opacity=".6"/><stop offset="1" stop-color="#30c030" stop-opacity="0"/></radialGradient>
<radialGradient id="tbHi" cx=".5" cy=".5" r=".5"><stop offset="0" stop-color="#b5f5ac" stop-opacity=".9"/><stop offset=".6" stop-color="#7ee077" stop-opacity=".5"/><stop offset="1" stop-color="#50c850" stop-opacity="0"/></radialGradient>
<g id="tb"><circle cx="16" cy="16" r="16" fill="url(#tbRim)"/><circle cx="15.500" cy="15.400" r="13.800" fill="url(#tbFill)"/><ellipse cx="15.500" cy="27.500" rx="8" ry="4.500" fill="url(#tbGlow)"/><ellipse cx="14.500" cy="6.500" rx="10" ry="5" fill="url(#tbHi)"/></g>
</defs></svg>
<div class="gb" style="left:443px;top:374px;width:911px;height:253px"></div>
<div class="gbl" style="left:449px;top:369px;letter-spacing:-0.3px">Triggers</div>
<div class="tg" style="left:450px;top:394px;width:300px;height:1px"></div><div class="tg" style="left:450px;top:434px;width:300px;height:1px"></div><div class="tg" style="left:450px;top:454px;width:300px;height:1px"></div><div class="tg" style="left:450px;top:494px;width:300px;height:1px"></div><div class="tg" style="left:450px;top:513px;width:300px;height:1px"></div><div class="tg" style="left:450px;top:394px;width:1px;height:120px"></div><div class="tg" style="left:749px;top:394px;width:1px;height:120px"></div><div class="tg" style="left:510px;top:434px;width:1px;height:20px"></div><div class="tg" style="left:510px;top:494px;width:1px;height:20px"></div><div class="tg" style="left:570px;top:434px;width:1px;height:20px"></div><div class="tg" style="left:570px;top:494px;width:1px;height:20px"></div><div class="tg" style="left:630px;top:434px;width:1px;height:20px"></div><div class="tg" style="left:630px;top:494px;width:1px;height:20px"></div><div class="tg" style="left:690px;top:434px;width:1px;height:20px"></div><div class="tg" style="left:690px;top:494px;width:1px;height:20px"></div><div class="tbn" style="left:464px;top:398px"><svg width="32" height="32"><use href="#tb"/></svg><span>1</span></div><div class="tbn" style="left:524px;top:398px"><svg width="32" height="32"><use href="#tb"/></svg><span>2</span></div><div class="tbn" style="left:584px;top:398px"><svg width="32" height="32"><use href="#tb"/></svg><span>3</span></div><div class="tbn" style="left:644px;top:398px"><svg width="32" height="32"><use href="#tb"/></svg><span>4</span></div><div class="tbn" style="left:704px;top:398px"><svg width="32" height="32"><use href="#tb"/></svg><span>5</span></div><div class="tbn" style="left:464px;top:458px"><svg width="32" height="32"><use href="#tb"/></svg><span>6</span></div><div class="tbn" style="left:524px;top:458px"><svg width="32" height="32"><use href="#tb"/></svg><span>7</span></div><div class="tbn" style="left:584px;top:458px"><svg width="32" height="32"><use href="#tb"/></svg><span>8</span></div><div class="tbn" style="left:644px;top:458px"><svg width="32" height="32"><use href="#tb"/></svg><span>9</span></div><div class="tbn" style="left:704px;top:458px;letter-spacing:-1px;text-indent:-1px"><svg width="32" height="32"><use href="#tb"/></svg><span>10</span></div>
<div class="lbl r" style="left:444px;width:150px;top:535px">External Contacts :</div>
<div class="combo" style="left:605px;top:534px"></div>
<div class="cb" style="left:450px;top:566px"><i></i><svg width="11" height="11"><use href="#chk"/></svg></div>
<div class="lbl" style="left:468px;top:567px">Next / Prev. activ on the scene</div>
<div class="cb" style="left:450px;top:593px"><i></i></div>
<div class="lbl" style="left:468px;top:594px">Repeat every :</div>
<div class="spin d" style="left:605px;top:591px;width:72px">0 h<b class="u"></b><b class="dn"></b></div>
<div class="spin d" style="left:678px;top:591px;width:72px">0 m<b class="u"></b><b class="dn"></b></div>
<div class="cb" style="left:774px;top:392px"><i></i></div>
<div class="lbl" style="left:792px;top:393px;letter-spacing:-0.1px">Start schedule :</div>
<div class="spin d" style="left:899px;top:390px;width:57px">0 h<b class="u"></b><b class="dn"></b></div>
<div class="spin d" style="left:957px;top:390px;width:57px">0 m<b class="u"></b><b class="dn"></b></div>
<div class="cb d" style="left:1024px;top:392px"></div>
<div class="lbl dis" style="left:1042px;top:393px;letter-spacing:-0.3px">End schedule :</div>
<div class="spin d" style="left:1149px;top:390px;width:57px">0 h<b class="u"></b><b class="dn"></b></div>
<div class="spin d" style="left:1207px;top:390px;width:57px">0 m<b class="u"></b><b class="dn"></b></div>
<div class="cal d" style="left:774px;top:424px"><div class="nav"><span style="left:79px">janvier</span><span style="left:131px;letter-spacing:.8px">2011</span><svg style="position:absolute;left:117px;top:15px" width="5" height="3"><path d="M0 0H5L2.500 3Z" fill="#fff"/></svg><svg style="position:absolute;left:3px;top:3px" width="16" height="16"><use href="#arDL"/></svg><svg style="position:absolute;left:219px;top:3px" width="16" height="16"><use href="#arDR"/></svg></div><div class="dn"></div><span class="c red" style="left:0.1px;top:27px">dim.</span><span class="c" style="left:34.4px;top:27px">lun.</span><span class="c" style="left:68.7px;top:27px">mar.</span><span class="c" style="left:103.0px;top:27px">mer.</span><span class="c" style="left:137.2px;top:27px">jeu.</span><span class="c" style="left:171.5px;top:27px">ven.</span><span class="c red" style="left:205.8px;top:27px">sam.</span><div class="selc" style="left:35px;top:80px;width:35px;height:19px"></div><span class="c gr" style="left:0.1px;top:46px">26</span><span class="c gr" style="left:34.4px;top:46px">27</span><span class="c gr" style="left:68.7px;top:46px">28</span><span class="c gr" style="left:103.0px;top:46px">29</span><span class="c gr" style="left:137.2px;top:46px">30</span><span class="c gr" style="left:171.5px;top:46px">31</span><span class="c red" style="left:205.8px;top:46px">1</span><span class="c red" style="left:0.1px;top:65px">2</span><span class="c" style="left:34.4px;top:65px">3</span><span class="c" style="left:68.7px;top:65px">4</span><span class="c" style="left:103.0px;top:65px">5</span><span class="c" style="left:137.2px;top:65px">6</span><span class="c" style="left:171.5px;top:65px">7</span><span class="c red" style="left:205.8px;top:65px">8</span><span class="c red" style="left:0.1px;top:84px">9</span><span class="c" style="left:34.4px;top:84px;color:#fff">10</span><span class="c" style="left:68.7px;top:84px">11</span><span class="c" style="left:103.0px;top:84px">12</span><span class="c" style="left:137.2px;top:84px">13</span><span class="c" style="left:171.5px;top:84px">14</span><span class="c red" style="left:205.8px;top:84px">15</span><span class="c red" style="left:0.1px;top:103px">16</span><span class="c" style="left:34.4px;top:103px">17</span><span class="c" style="left:68.7px;top:103px">18</span><span class="c" style="left:103.0px;top:103px">19</span><span class="c" style="left:137.2px;top:103px">20</span><span class="c" style="left:171.5px;top:103px">21</span><span class="c red" style="left:205.8px;top:103px">22</span><span class="c red" style="left:0.1px;top:122px">23</span><span class="c" style="left:34.4px;top:122px">24</span><span class="c" style="left:68.7px;top:122px">25</span><span class="c" style="left:103.0px;top:122px">26</span><span class="c" style="left:137.2px;top:122px">27</span><span class="c" style="left:171.5px;top:122px">28</span><span class="c red" style="left:205.8px;top:122px">29</span><span class="c red" style="left:0.1px;top:141px">30</span><span class="c" style="left:34.4px;top:141px">31</span><span class="c gr" style="left:68.7px;top:141px">1</span><span class="c gr" style="left:103.0px;top:141px">2</span><span class="c gr" style="left:137.2px;top:141px">3</span><span class="c gr" style="left:171.5px;top:141px">4</span><span class="c gr" style="left:205.8px;top:141px">5</span></div>
<div class="cal d" style="left:1024px;top:424px"><div class="nav"><span style="left:79px">janvier</span><span style="left:131px;letter-spacing:.8px">2011</span><svg style="position:absolute;left:117px;top:15px" width="5" height="3"><path d="M0 0H5L2.500 3Z" fill="#fff"/></svg><svg style="position:absolute;left:3px;top:3px" width="16" height="16"><use href="#arDL"/></svg><svg style="position:absolute;left:219px;top:3px" width="16" height="16"><use href="#arDR"/></svg></div><div class="dn"></div><span class="c red" style="left:0.1px;top:27px">dim.</span><span class="c" style="left:34.4px;top:27px">lun.</span><span class="c" style="left:68.7px;top:27px">mar.</span><span class="c" style="left:103.0px;top:27px">mer.</span><span class="c" style="left:137.2px;top:27px">jeu.</span><span class="c" style="left:171.5px;top:27px">ven.</span><span class="c red" style="left:205.8px;top:27px">sam.</span><div class="selc" style="left:35px;top:80px;width:35px;height:19px"></div><span class="c gr" style="left:0.1px;top:46px">26</span><span class="c gr" style="left:34.4px;top:46px">27</span><span class="c gr" style="left:68.7px;top:46px">28</span><span class="c gr" style="left:103.0px;top:46px">29</span><span class="c gr" style="left:137.2px;top:46px">30</span><span class="c gr" style="left:171.5px;top:46px">31</span><span class="c red" style="left:205.8px;top:46px">1</span><span class="c red" style="left:0.1px;top:65px">2</span><span class="c" style="left:34.4px;top:65px">3</span><span class="c" style="left:68.7px;top:65px">4</span><span class="c" style="left:103.0px;top:65px">5</span><span class="c" style="left:137.2px;top:65px">6</span><span class="c" style="left:171.5px;top:65px">7</span><span class="c red" style="left:205.8px;top:65px">8</span><span class="c red" style="left:0.1px;top:84px">9</span><span class="c" style="left:34.4px;top:84px;color:#fff">10</span><span class="c" style="left:68.7px;top:84px">11</span><span class="c" style="left:103.0px;top:84px">12</span><span class="c" style="left:137.2px;top:84px">13</span><span class="c" style="left:171.5px;top:84px">14</span><span class="c red" style="left:205.8px;top:84px">15</span><span class="c red" style="left:0.1px;top:103px">16</span><span class="c" style="left:34.4px;top:103px">17</span><span class="c" style="left:68.7px;top:103px">18</span><span class="c" style="left:103.0px;top:103px">19</span><span class="c" style="left:137.2px;top:103px">20</span><span class="c" style="left:171.5px;top:103px">21</span><span class="c red" style="left:205.8px;top:103px">22</span><span class="c red" style="left:0.1px;top:122px">23</span><span class="c" style="left:34.4px;top:122px">24</span><span class="c" style="left:68.7px;top:122px">25</span><span class="c" style="left:103.0px;top:122px">26</span><span class="c" style="left:137.2px;top:122px">27</span><span class="c" style="left:171.5px;top:122px">28</span><span class="c red" style="left:205.8px;top:122px">29</span><span class="c red" style="left:0.1px;top:141px">30</span><span class="c" style="left:34.4px;top:141px">31</span><span class="c gr" style="left:68.7px;top:141px">1</span><span class="c gr" style="left:103.0px;top:141px">2</span><span class="c gr" style="left:137.2px;top:141px">3</span><span class="c gr" style="left:171.5px;top:141px">4</span><span class="c gr" style="left:205.8px;top:141px">5</span></div>
<div class="cb d" style="left:774px;top:598px"></div><div class="lbl dis" style="left:792px;top:599px;letter-spacing:-0.4px">Sunday</div>
<div class="cb d" style="left:842px;top:598px"></div><div class="lbl dis" style="left:860px;top:599px;letter-spacing:-0.3px">Monday</div>
<div class="cb d" style="left:910px;top:598px"></div><div class="lbl dis" style="left:928px;top:599px;letter-spacing:-0.4px">Tuesday</div>
<div class="cb d" style="left:977px;top:598px"></div><div class="lbl dis" style="left:995px;top:599px;letter-spacing:-0.2px">Wednesday</div>
<div class="cb d" style="left:1059px;top:598px"></div><div class="lbl dis" style="left:1077px;top:599px;letter-spacing:-0.2px">Thursday</div>
<div class="cb d" style="left:1129px;top:598px"></div><div class="lbl dis" style="left:1146px;top:599px">Friday</div>
<div class="cb d" style="left:1197px;top:598px"></div><div class="lbl dis" style="left:1214px;top:599px">Saturday</div>

<div class="btn" style="left:444px;top:639px;width:306px;height:21px;line-height:21px;letter-spacing:-0.17px">Set Stand Alone Mode</div>
<div class="btn" style="left:774px;top:639px;width:486px;height:21px;line-height:21px;letter-spacing:-0.3px">Save in Memory</div>


<div id="bpanel"></div>
<div style="position:absolute;left:183px;top:731px;width:1px;height:106px;background:#c9c9d6"></div>
<div class="btn" style="left:19px;top:736px;width:75px;height:32px;border-color:#c3c3cc;background:#f4f4f4;box-shadow:none"></div>
<div class="btn" style="left:102px;top:736px;width:75px;height:32px"></div>
<svg style="position:absolute;left:19px;top:737px" width="160" height="31" viewBox="19 737 160 31">
<defs>
<radialGradient id="zmB" cx=".45" cy=".4" r=".6"><stop offset="0" stop-color="#7fe0ff"/><stop offset=".6" stop-color="#2aa0e0"/><stop offset="1" stop-color="#1670c0"/></radialGradient>
<radialGradient id="zmG" cx=".45" cy=".4" r=".6"><stop offset="0" stop-color="#ededed"/><stop offset="1" stop-color="#c4c4c4"/></radialGradient>
</defs>
<path d="M46.200 762.300 L52.500 756" stroke="#8c8c8c" stroke-width="4.800" stroke-linecap="round"/>
<path d="M46.200 762.300 L52.500 756" stroke="#cdcdcd" stroke-width="2.600" stroke-linecap="round"/>
<circle cx="58.700" cy="749.600" r="8.300" fill="url(#zmG)" stroke="#8e8e8e" stroke-width="2"/>
<circle cx="58.700" cy="749.600" r="5.800" fill="#b6b6b6"/>
<rect x="55.200" y="748.400" width="7" height="2.400" rx=".6" fill="#f4f4f4"/>
<path d="M129.200 762.300 L135.500 756" stroke="#50505a" stroke-width="4.800" stroke-linecap="round"/>
<path d="M129.200 762.300 L135.500 756" stroke="#b9bcc4" stroke-width="2.600" stroke-linecap="round"/>
<circle cx="141.700" cy="749.600" r="8.300" fill="#dfe6ee" stroke="#44444c" stroke-width="2.200"/>
<circle cx="141.700" cy="749.600" r="6" fill="url(#zmB)"/>
<path d="M138 749.600 H145.400 M141.700 745.900 V753.300" stroke="#fff" stroke-width="2.500"/>
</svg>
<div class="gb" style="left:18px;top:777px;width:160px;height:55px"></div>
<div class="gbl" style="left:25px;top:772px">Current date</div>
<div class="spin d s20" style="left:25px;top:787px;width:48px;padding-left:4px">10<b class="u"></b><b class="dn"></b></div>
<div class="spin d s20" style="left:74px;top:787px;width:48px;padding-left:4px">1<b class="u"></b><b class="dn"></b></div>
<div class="spin s20" style="left:122px;top:787px;width:48px">2011<b class="u"></b><b class="dn"></b></div>
<div class="lbl" style="left:18px;width:160px;text-align:center;top:814px">10 janvier 2011</div>
<div id="tl">
<div class="sb"></div>
<svg style="position:absolute;left:0;top:0" width="9" height="15"><rect width="9" height="15" fill="#c3c6ea"/><path d="M9 0 H5 Q1.500 3 1.500 7.500 Q1.500 12 5 15 H9 Z" fill="#f4f4fa" stroke="#7a7e9e" stroke-width="1"/></svg>
<svg style="position:absolute;left:1159px;top:0" width="10" height="15"><rect width="10" height="15" fill="#c3c6ea"/><path d="M0 0 H4 Q7.500 3 7.500 7.500 Q7.500 12 4 15 H0 Z" fill="#f4f4fa" stroke="#7a7e9e" stroke-width="1"/></svg>
<div class="grip" style="left:8px"></div><div class="grip" style="left:1146px"></div>
<svg style="position:absolute;left:10px;top:3px" width="9" height="9"><g fill="#c2c2cc"><rect x="0" y="0" width="1" height="1"/><rect x="3" y="0" width="1" height="1"/><rect x="6" y="0" width="1" height="1"/><rect x="0" y="3" width="1" height="1"/><rect x="3" y="3" width="1" height="1"/><rect x="6" y="3" width="1" height="1"/><rect x="0" y="6" width="1" height="1"/><rect x="3" y="6" width="1" height="1"/><rect x="6" y="6" width="1" height="1"/></g></svg>
<svg style="position:absolute;left:1149px;top:3px" width="9" height="9"><g fill="#c2c2cc"><rect x="0" y="0" width="1" height="1"/><rect x="3" y="0" width="1" height="1"/><rect x="6" y="0" width="1" height="1"/><rect x="0" y="3" width="1" height="1"/><rect x="3" y="3" width="1" height="1"/><rect x="6" y="3" width="1" height="1"/><rect x="0" y="6" width="1" height="1"/><rect x="3" y="6" width="1" height="1"/><rect x="6" y="6" width="1" height="1"/></g></svg>
<div class="ruler"></div>
<i class="mk" style="left:95px"></i><i class="mn" style="left:47px"></i><span class="ml" style="left:95px">févr.</span><i class="mk" style="left:191px"></i><i class="mn" style="left:143px"></i><span class="ml" style="left:191px">mars</span><i class="mk" style="left:287px"></i><i class="mn" style="left:239px"></i><span class="ml" style="left:287px">avr.</span><i class="mk" style="left:383px"></i><i class="mn" style="left:335px"></i><span class="ml" style="left:383px">mai</span><i class="mk" style="left:479px"></i><i class="mn" style="left:431px"></i><span class="ml" style="left:479px">juin</span><i class="mk" style="left:575px"></i><i class="mn" style="left:527px"></i><span class="ml" style="left:575px">juil.</span><i class="mk" style="left:671px"></i><i class="mn" style="left:623px"></i><span class="ml" style="left:671px">août</span><i class="mk" style="left:767px"></i><i class="mn" style="left:719px"></i><span class="ml" style="left:767px">sept.</span><i class="mk" style="left:863px"></i><i class="mn" style="left:815px"></i><span class="ml" style="left:863px">oct.</span><i class="mk" style="left:959px"></i><i class="mn" style="left:911px"></i><span class="ml" style="left:959px">nov.</span><i class="mk" style="left:1055px"></i><i class="mn" style="left:1007px"></i><span class="ml" style="left:1055px">déc.</span><i class="mk" style="left:1151px"></i><i class="mn" style="left:1103px"></i><span class="ml" style="left:1151px">janv.</span><div class="seg" style="left:31px;width:64px;background:#bccba0"></div><div class="seg" style="left:95px;width:192px;background:#f8b585"></div><div class="seg" style="left:287px;width:288px;background:#89a6e1"></div><div class="seg" style="left:575px;width:192px;background:#f09ea0"></div><div class="seg" style="left:767px;width:384px;background:#9abfb3"></div>
<svg style="position:absolute;left:24px;top:15px" width="14" height="24"><path d="M1.500 0 H11.500 V18 L6.500 23 L1.500 18 Z" fill="#ececf4" fill-opacity=".85" stroke="#b4b4c4" stroke-width="1"/></svg>
<div style="position:absolute;left:30px;top:15px;width:1px;height:91px;background:#b01818"></div>
<div style="position:absolute;left:31px;top:15px;width:1px;height:24px;background:#f4b0b0"></div>
<div style="position:absolute;left:31px;top:40px;width:1px;height:66px;background:#f0a078"></div>
</div>

</div>
</body>
</html>
